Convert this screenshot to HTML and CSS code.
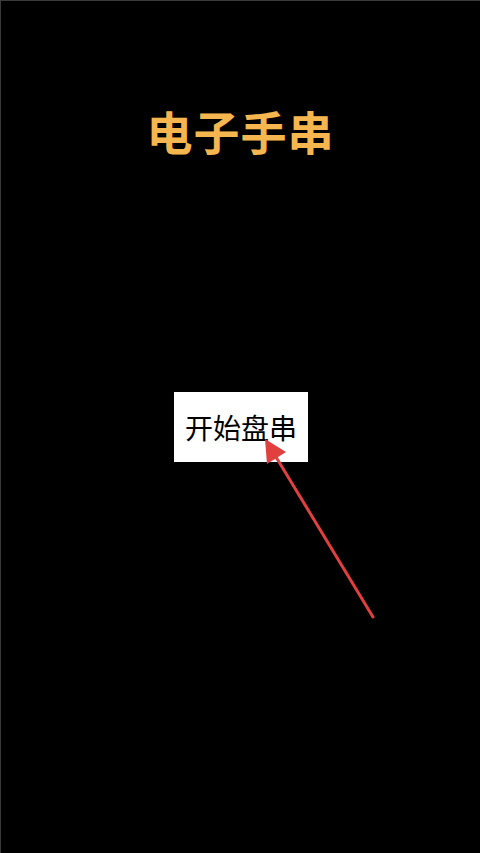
FILE: index.html
```html
<!DOCTYPE html>
<html lang="zh">
<head>
<meta charset="utf-8">
<link rel="stylesheet" href="styles.css">
</head>
<body>
<div class="screen">
  <h1 class="title">电子手串</h1>
  <div class="start-wrap">
    <div class="start-btn">开始盘串</div>
  </div>
  <svg class="arrow" width="480" height="853" viewBox="0 0 480 853">
    <line x1="373" y1="617" x2="276" y2="457" stroke="#e2403f" stroke-width="3" stroke-linecap="round"/>
    <polygon points="265,439 286,452 267,464" fill="#e2403f"/>
  </svg>
</div>
</body>
</html>
```
FILE: styles.css
```css
html, body {
  margin: 0;
  padding: 0;
  background: #000;
}
.screen {
  position: relative;
  width: 480px;
  height: 853px;
  box-sizing: border-box;
  border-top: 1px solid #3a3a3a;
  border-left: 1px solid #3a3a3a;
  background: #000;
  display: flex;
  flex-direction: column;
  align-items: center;
  font-family: "Noto Sans CJK SC", "Noto Sans", sans-serif;
  overflow: hidden;
}
.title {
  margin: 101px 0 0 0;
  font-size: 46px;
  line-height: 56px;
  font-weight: 700;
  color: #f5b64f;
  letter-spacing: 1px;
}
.start-wrap {
  margin-top: 234px;
  display: flex;
  justify-content: center;
}
.start-btn {
  width: 134px;
  height: 70px;
  background: #fff;
  color: #000;
  font-size: 28px;
  display: flex;
  align-items: center;
  justify-content: center;
  box-sizing: border-box;
  padding-left: 1px;
}
.arrow {
  position: absolute;
  left: -1px;
  top: -1px;
}
```
